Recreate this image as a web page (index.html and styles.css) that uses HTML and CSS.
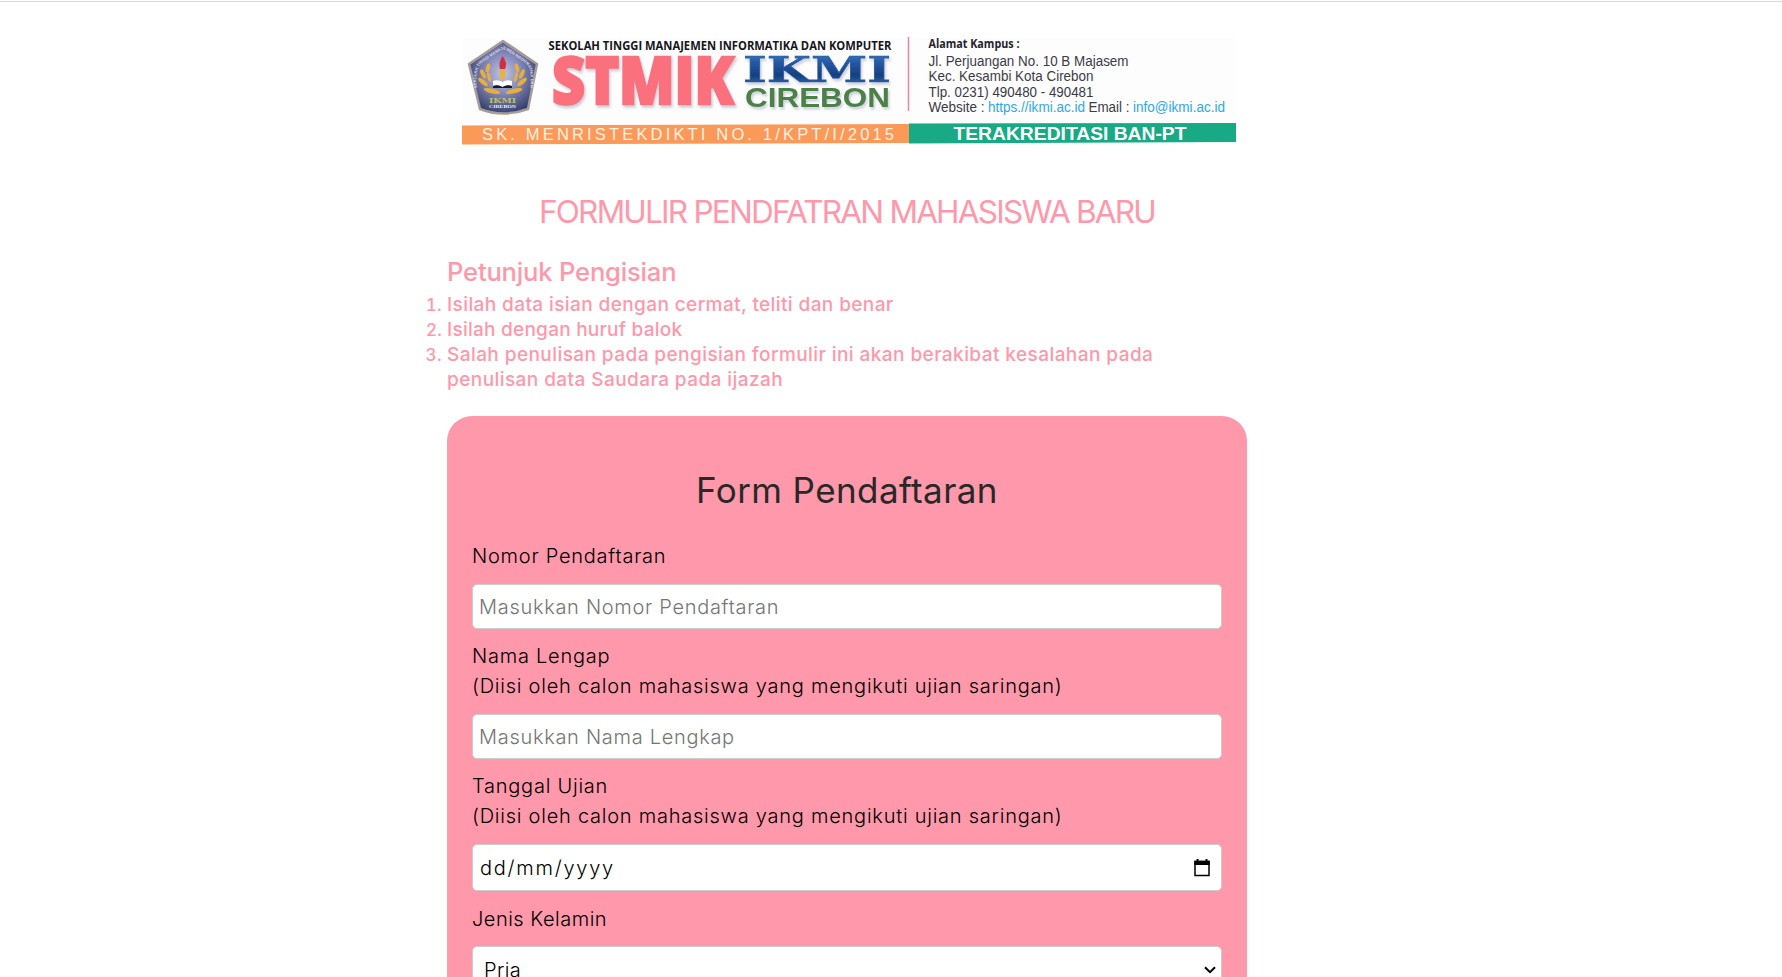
FILE: index.html
```html
<!DOCTYPE html>
<html lang="id">
<head>
<meta charset="utf-8">
<title>Formulir Pendaftaran</title>
<link rel="stylesheet" href="styles.css">
</head>
<body>
<main class="page">
  <svg class="banner" viewBox="447 20 800 140" role="img" aria-label="STMIK IKMI Cirebon">
    <defs>
      <radialGradient id="shield" cx="50%" cy="45%" r="60%">
        <stop offset="0" stop-color="#c4c6e4"/><stop offset=".45" stop-color="#8489b8"/><stop offset="1" stop-color="#2e3864"/>
      </radialGradient>
      <linearGradient id="blue" x1="0" y1="0" x2="0" y2="1">
        <stop offset="0" stop-color="#4a86c4"/><stop offset=".35" stop-color="#2459a4"/><stop offset=".65" stop-color="#16407f"/><stop offset="1" stop-color="#3f7cc0"/>
      </linearGradient>
      <filter id="shade" x="-5%" y="-10%" width="115%" height="130%">
        <feDropShadow dx="1.5" dy="2.5" stdDeviation="1" flood-color="#9ba1b4" flood-opacity=".5"/>
      </filter>
      <path id="arc" d="M477 88 Q474 68 483 62 L501 50 Q503 49 506 50 L524 62 Q533 68 530 88"/>
    </defs>
    <rect x="462" y="38" width="774" height="86" fill="#fdfdfe"/>
    <path d="M503 41 L537 64 L528 109 Q503 118 480 109 L469 64Z" fill="url(#shield)" stroke="#a89c9b" stroke-width="2.5" stroke-linejoin="round"/>
    <text class="seal-ring"><textPath href="#arc" textLength="104">SEKOLAH TINGGI MANAJEMEN INFORMATIKA DAN</textPath></text>
    <g fill="#e8ae3c">
      <ellipse cx="488" cy="68" rx="2" ry="4.5" transform="rotate(15 488 68)"/>
      <ellipse cx="483" cy="74" rx="2" ry="5" transform="rotate(-25 483 74)"/>
      <ellipse cx="483" cy="82" rx="2.2" ry="6" transform="rotate(-50 483 82)"/>
      <ellipse cx="489" cy="77" rx="1.6" ry="5" transform="rotate(-15 489 77)"/>
      <ellipse cx="492" cy="91" rx="8.5" ry="2.4" transform="rotate(14 492 91)"/>
      <ellipse cx="517" cy="68" rx="2" ry="4.5" transform="rotate(-15 517 68)"/>
      <ellipse cx="522" cy="74" rx="2" ry="5" transform="rotate(25 522 74)"/>
      <ellipse cx="522" cy="82" rx="2.2" ry="6" transform="rotate(50 522 82)"/>
      <ellipse cx="516" cy="77" rx="1.6" ry="5" transform="rotate(15 516 77)"/>
      <ellipse cx="514" cy="91" rx="8.5" ry="2.4" transform="rotate(-14 514 91)"/>
    </g>
    <path d="M499 69H506L504.500 80H500.500Z" fill="#e3b248"/>
    <path d="M502.500 56Q508 63 505 69H500Q498 63 502.500 56" fill="#cf2f46"/>
    <path d="M493 81Q498 79 502.500 82Q507 79 512 81V86Q507 84 502.500 87Q498 84 493 86Z" fill="#fff"/>
    <path d="M493 86Q498 84 502.500 87Q507 84 512 86V88H493Z" fill="#171b29"/>
    <text class="seal-name" x="489" y="103" textLength="27" lengthAdjust="spacingAndGlyphs">IKMI</text>
    <text class="seal-city" x="489" y="108" textLength="27" lengthAdjust="spacingAndGlyphs">CIREBON</text>

    <text class="school" x="548.500" y="50" textLength="343" lengthAdjust="spacingAndGlyphs">SEKOLAH TINGGI MANAJEMEN INFORMATIKA DAN KOMPUTER</text>
    <text class="stmik" x="552" y="103.500" textLength="182" lengthAdjust="spacingAndGlyphs" filter="url(#shade)">STMIK</text>
    <text class="ikmi" x="743" y="82" textLength="148" lengthAdjust="spacingAndGlyphs" filter="url(#shade)">IKMI</text>
    <text class="cirebon" x="745" y="107" textLength="145" lengthAdjust="spacingAndGlyphs" filter="url(#shade)">CIREBON</text>
    <path d="M908.500 37V111" stroke="#e9879b" stroke-width="1.500"/>

    <text class="alamat" x="928.500" y="48" textLength="91" lengthAdjust="spacingAndGlyphs">Alamat Kampus :</text>
    <g class="info">
      <text x="928.500" y="66" textLength="200" lengthAdjust="spacingAndGlyphs">Jl. Perjuangan No. 10 B Majasem</text>
      <text x="928.500" y="81" textLength="165" lengthAdjust="spacingAndGlyphs">Kec. Kesambi Kota Cirebon</text>
      <text x="928.500" y="96.500" textLength="165" lengthAdjust="spacingAndGlyphs">Tlp. 0231) 490480 - 490481</text>
      <text x="928.500" y="112" textLength="56" lengthAdjust="spacingAndGlyphs">Website :</text>
      <text class="link" x="988" y="112" textLength="97" lengthAdjust="spacingAndGlyphs">https.//ikmi.ac.id</text>
      <text x="1088.500" y="112" textLength="41" lengthAdjust="spacingAndGlyphs">Email :</text>
      <text class="link" x="1133" y="112" textLength="92" lengthAdjust="spacingAndGlyphs">info@ikmi.ac.id</text>
    </g>
    <path d="M462 125.500L909 124V143L462 144.500Z" fill="#fb9959"/>
    <path d="M909 123.500L1236 123V142L909 143.500Z" fill="#18aa84"/>
    <text class="sk" x="482" y="140" textLength="412">SK. MENRISTEKDIKTI NO. 1/KPT/I/2015</text>
    <text class="ban" x="953.500" y="139.500" textLength="233" lengthAdjust="spacingAndGlyphs">TERAKREDITASI BAN-PT</text>
  </svg>

  <h1 class="title">FORMULIR PENDFATRAN MAHASISWA BARU</h1>
  <section class="guide">
    <h2 class="guide-title">Petunjuk Pengisian</h2>
    <ol class="guide-list">
      <li>Isilah data isian dengan cermat, teliti dan benar</li>
      <li>Isilah dengan huruf balok</li>
      <li>Salah penulisan pada pengisian formulir ini akan berakibat kesalahan pada<br>penulisan data Saudara pada ijazah</li>
    </ol>
  </section>

  <form class="card">
    <h2 class="card-title">Form Pendaftaran</h2>
    <label class="label" for="nomor">Nomor Pendaftaran</label>
    <input class="field" id="nomor" type="text" placeholder="Masukkan Nomor Pendaftaran">
    <label class="label" for="nama">Nama Lengap<br>(Diisi oleh calon mahasiswa yang mengikuti ujian saringan)</label>
    <input class="field" id="nama" type="text" placeholder="Masukkan Nama Lengkap">
    <label class="label">Tanggal Ujian<br>(Diisi oleh calon mahasiswa yang mengikuti ujian saringan)</label>
    <div class="field date">
      <span>dd/mm/yyyy</span>
      <svg class="calendar" viewBox="0 0 16 18"><path d="M1 2.500H15V16.500H1Z" fill="none" stroke="#000" stroke-width="1.500"/><path d="M.3 1.800H15.700V6H.3ZM2.500 0H4.500V3H2.500ZM11.500 0H13.500V3H11.500Z"/></svg>
    </div>
    <label class="label label-kelamin" for="kelamin">Jenis Kelamin</label>
    <div class="field select" id="kelamin">
      <span>Pria</span>
      <svg class="chevron" viewBox="0 0 12 8"><path d="M1 1.200L6 6.200L11 1.200" fill="none" stroke="#000" stroke-width="2"/></svg>
    </div>
  </form>
</main>
</body>
</html>
```
FILE: styles.css
```css
* { box-sizing: border-box; margin: 0; padding: 0; }

html { height: 100%; overflow: hidden; }

body {
  height: 977px;
  overflow: hidden;
  background: #fff;
  border-top: 1px solid #fdfdfd;
  box-shadow: inset 0 1px 0 #d9dadb;
  font-family: Inter, "Open Sans", sans-serif;
  font-weight: 300;
}

.page {
  display: flex;
  flex-direction: column;
  width: 800px;
  height: 976px;
  margin-left: 447px;
  padding-top: 19px;
}

.banner { display: block; flex: none; width: 800px; height: 140px; }
.seal-ring { font: bold 4px "Liberation Sans", sans-serif; fill: #d7d9ea; }
.seal-name { font: bold 8px "DejaVu Serif", serif; fill: #b9c06d; }
.seal-city { font: bold 5px "Liberation Serif", serif; fill: #eceef6; }
.school { font: bold 13px "Open Sans", sans-serif; fill: #17151c; }
.stmik { font: 800 65px "Open Sans", sans-serif; fill: #fb6f7d; stroke: #fb6f7d; stroke-width: 2.5px; }
.ikmi { font: bold 36px "DejaVu Serif", serif; fill: url(#blue); stroke: #2459a4; stroke-width: .6px; }
.cirebon { font: bold 27px "Liberation Sans", sans-serif; fill: #4c8047; }
.alamat { font: bold 13px "Open Sans", sans-serif; fill: #25232c; }
.info { font: 14px "Liberation Sans", sans-serif; fill: #3c3a45; }
.link { fill: #2fa9e6; }
.sk { font: 16.5px "Liberation Sans", sans-serif; fill: #fff1e4; }
.ban { font: bold 18px "Liberation Sans", sans-serif; fill: #fff; }

.title {
  margin-top: 28px;
  color: #ff98aa;
  font-size: 31.5px;
  font-weight: 430;
  line-height: 48px;
  letter-spacing: -1.75px;
  text-align: center;
  white-space: nowrap;
}

.guide { margin-top: 18px; color: #ff98aa; }
.guide-title { margin: -1px 0 1px; font-size: 25.5px; font-weight: 500; line-height: 38px; letter-spacing: -0.15px; }
.guide-list { font-size: 19px; font-weight: 500; line-height: 25px; letter-spacing: 0.4px; }
.guide-list li { white-space: nowrap; }
.guide-list li::marker { font-size: 17px; }
.guide-list li:nth-child(2) { letter-spacing: 0.25px; }
.guide-list li:nth-child(3) { letter-spacing: 0.43px; }

.card {
  display: flex;
  flex: 1;
  flex-direction: column;
  min-height: 0;
  overflow: hidden;
  margin-top: 24px;
  padding: 48px 25px 0;
  border-radius: 25px 25px 0 0;
  background: #ff98aa;
  color: #000;
  font-size: 20px;
  letter-spacing: 0.76px;
}
.card-title {
  flex: none;
  margin-bottom: 24px;
  color: #282828;
  font-size: 35px;
  font-weight: 430;
  line-height: 53px;
  letter-spacing: 0.4px;
  text-align: center;
}
.label { flex: none; line-height: 30px; margin-bottom: 13px; }
.label-kelamin { margin: 1px 0 12px; letter-spacing: 0.5px; }
.field {
  flex: none;
  width: 750px;
  height: 45px;
  margin-bottom: 12px;
  padding: 0 6px;
  border: 1px solid #ccc;
  border-radius: 5px;
  background: #fff;
  color: #000;
  font: inherit;
  letter-spacing: 0.7px;
}
.field::placeholder { color: #757575; opacity: 1; }
.date, .select { display: flex; align-items: center; justify-content: space-between; height: 47px; }
.date { padding: 0 11px 0 7px; letter-spacing: 1.75px; }
.select { padding: 0 5px 0 11px; letter-spacing: 0.4px; }
.calendar { width: 16px; height: 18px; }
.chevron { width: 12px; height: 8px; }
```
